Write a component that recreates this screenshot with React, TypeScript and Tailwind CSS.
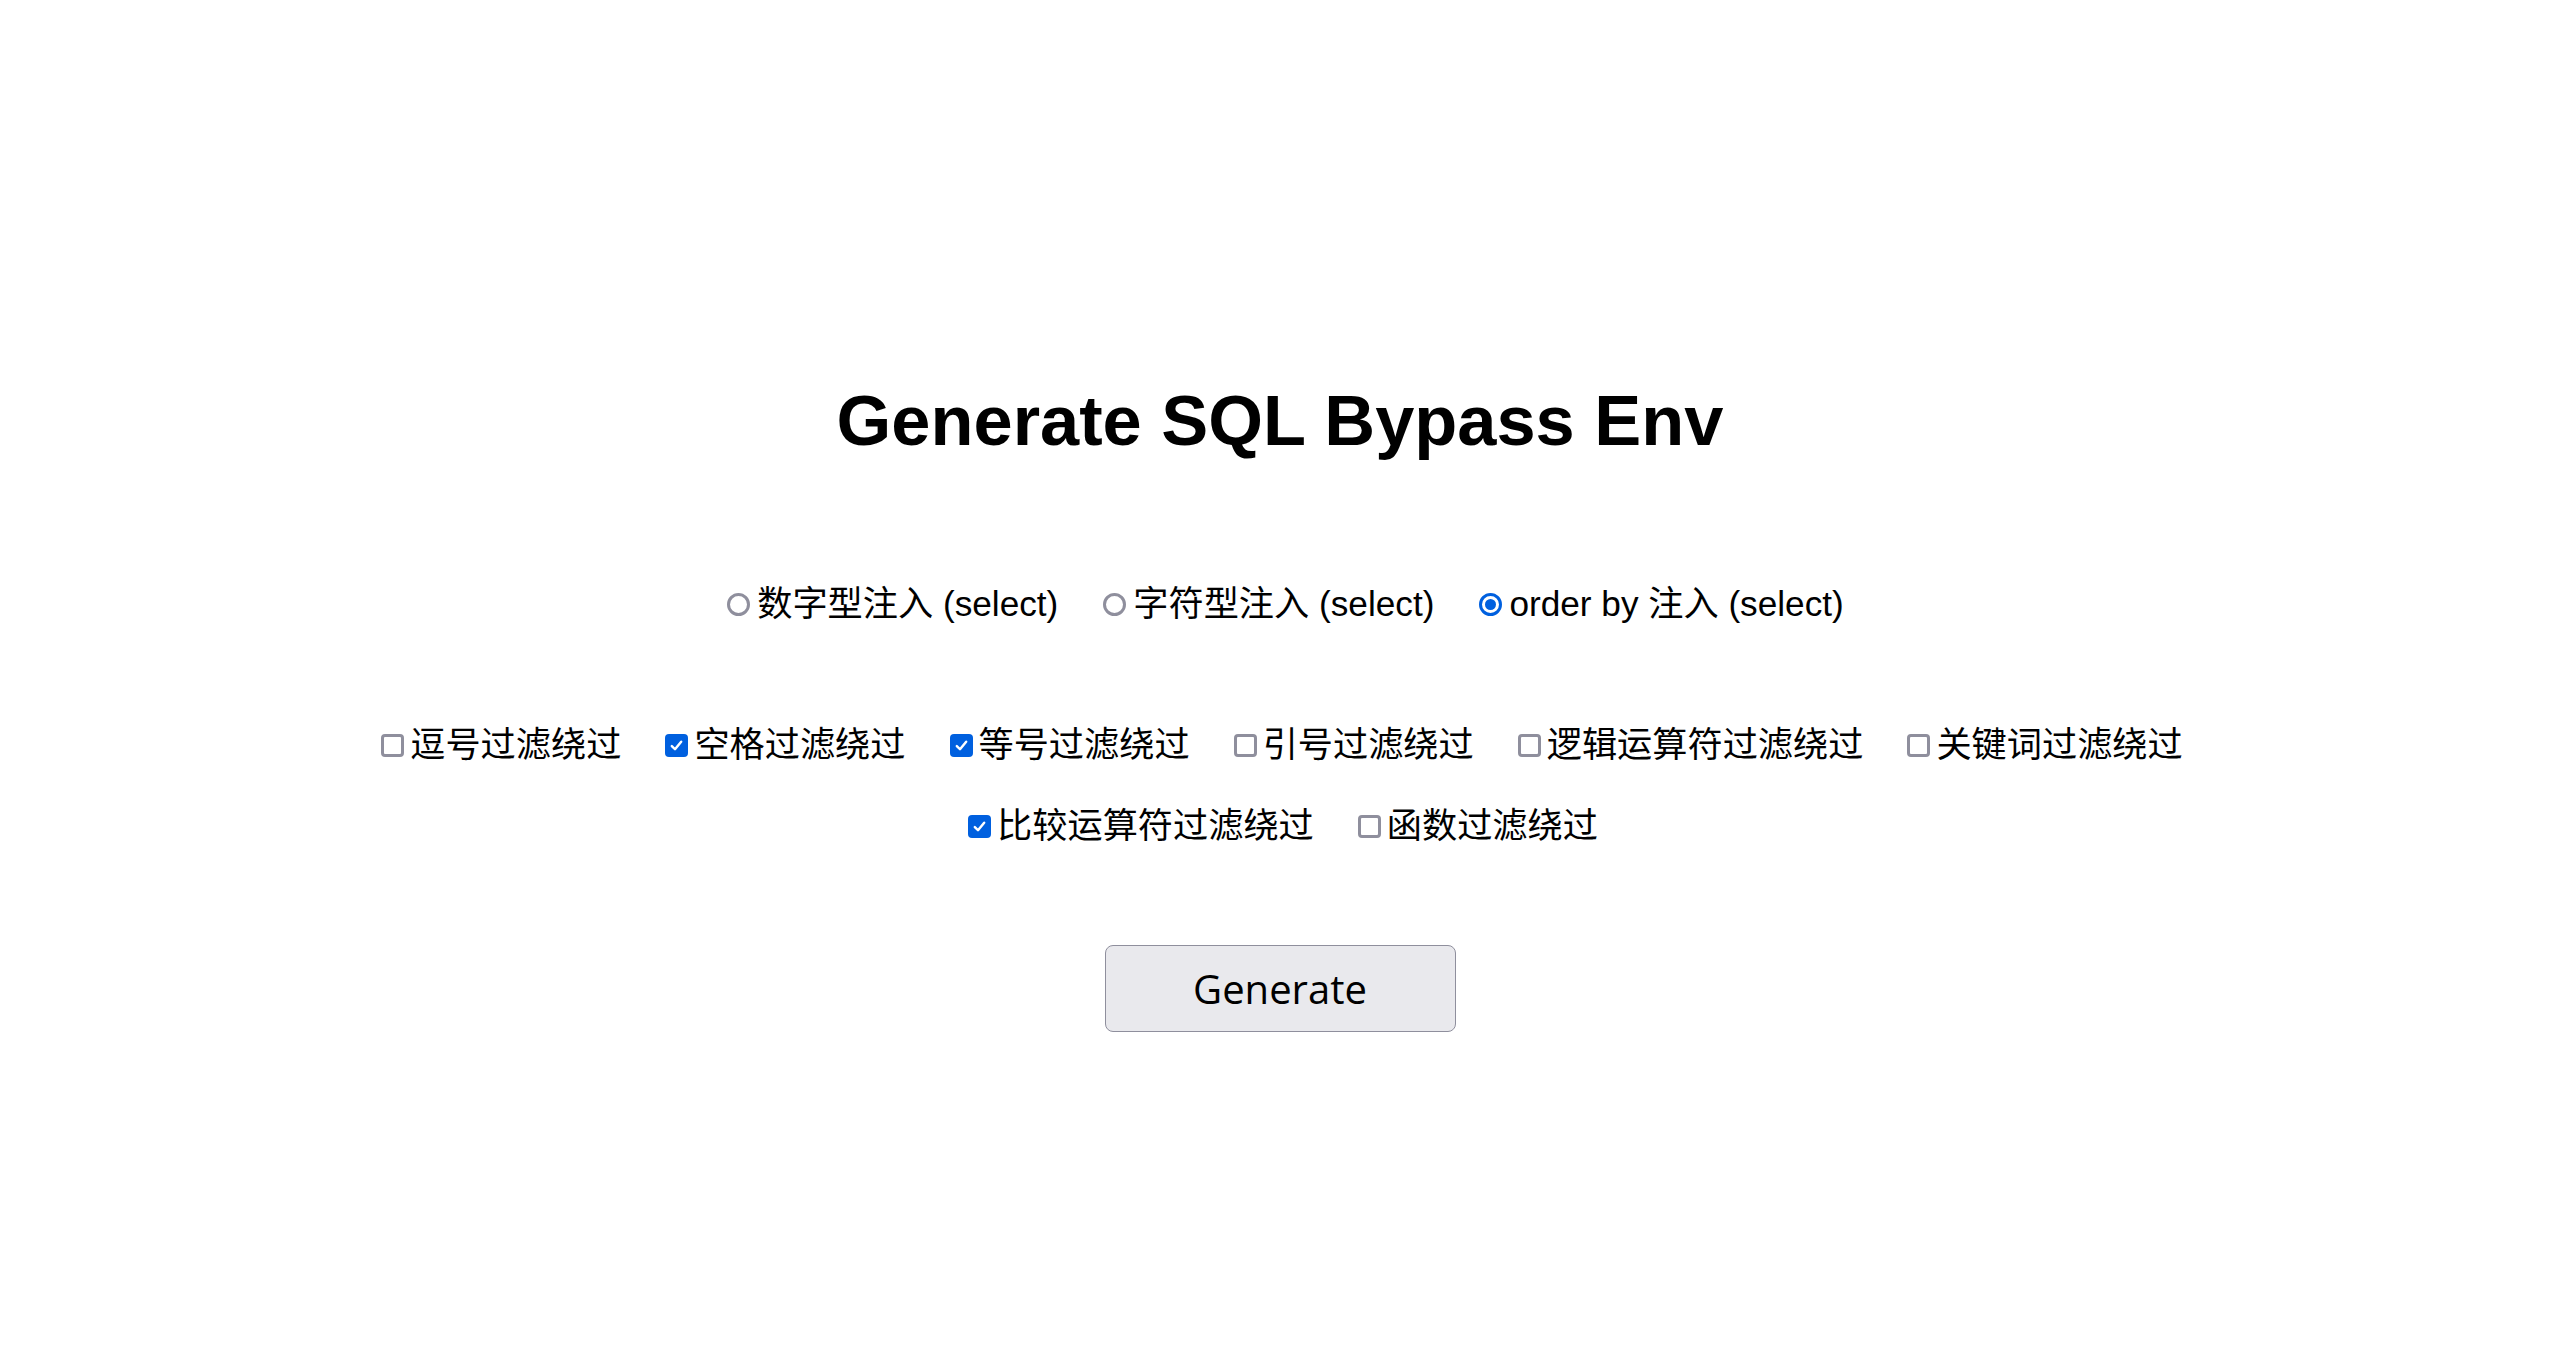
import React from "react";

function Radio({ checked }: { checked?: boolean }) {
  if (checked) {
    return (
      <span className="flex h-[23px] w-[23px] shrink-0 items-center justify-center rounded-full border-[3px] border-[#0060df] bg-white">
        <span className="h-[11px] w-[11px] rounded-full bg-[#0060df]" />
      </span>
    );
  }
  return <span className="block h-[23px] w-[23px] shrink-0 rounded-full border-[3px] border-[#8f8f9d] bg-white" />;
}

function Checkbox({ checked }: { checked?: boolean }) {
  if (checked) {
    return (
      <span className="flex h-[23px] w-[23px] shrink-0 items-center justify-center rounded-[4px] bg-[#0060df]">
        <svg width="15" height="15" viewBox="0 0 16 16" fill="none">
          <path d="M3 8.6 L6.4 12 L13 4" stroke="white" strokeWidth="2.6" strokeLinecap="round" strokeLinejoin="round" />
        </svg>
      </span>
    );
  }
  return <span className="block h-[23px] w-[23px] shrink-0 rounded-[4px] border-[3px] border-[#8f8f9d] bg-white" />;
}

function CheckItem({ checked, label }: { checked?: boolean; label: string }) {
  return (
    <label className="flex items-center gap-[6px]">
      <Checkbox checked={checked} />
      <span className="whitespace-nowrap">{label}</span>
    </label>
  );
}

function RadioItem({ checked, label }: { checked?: boolean; label: string }) {
  return (
    <label className="flex items-center gap-[7px]">
      <Radio checked={checked} />
      <span className="whitespace-nowrap">{label}</span>
    </label>
  );
}

export default function App() {
  const font = { fontFamily: '"Liberation Sans", "Noto Sans CJK SC", Arial, sans-serif' };
  return (
    <div className="min-h-[1367px] w-full bg-white text-black" style={font}>
      <div className="flex flex-col items-center">
        <h1 className="mt-[381px] h-[80px] text-[70.4px] font-bold leading-[80px]">Generate SQL Bypass Env</h1>

        <div className="mt-[118px] flex h-[50px] items-center gap-[45px] pl-[11px] text-[35.2px] leading-[50px]">
          <RadioItem label="数字型注入 (select)" />
          <RadioItem label="字符型注入 (select)" />
          <RadioItem checked label="order by 注入 (select)" />
        </div>

        <div className="mt-[91px] flex h-[50px] items-center gap-[44px] pl-[4px] text-[35.2px] leading-[50px]">
          <CheckItem label="逗号过滤绕过" />
          <CheckItem checked label="空格过滤绕过" />
          <CheckItem checked label="等号过滤绕过" />
          <CheckItem label="引号过滤绕过" />
          <CheckItem label="逻辑运算符过滤绕过" />
          <CheckItem label="关键词过滤绕过" />
        </div>

        <div className="mt-[31px] flex h-[50px] items-center gap-[44px] pl-[6px] text-[35.2px] leading-[50px]">
          <CheckItem checked label="比较运算符过滤绕过" />
          <CheckItem label="函数过滤绕过" />
        </div>

        <button
          type="button"
          className="mt-[94px] flex h-[87px] w-[351px] items-center justify-center rounded-[8px] border border-[#8f8f9d] bg-[#e9e9ed] text-[40px] text-black"
          style={{ fontFamily: '"Open Sans", "Noto Sans", sans-serif' }}
        >
          Generate
        </button>
      </div>
    </div>
  );
}
